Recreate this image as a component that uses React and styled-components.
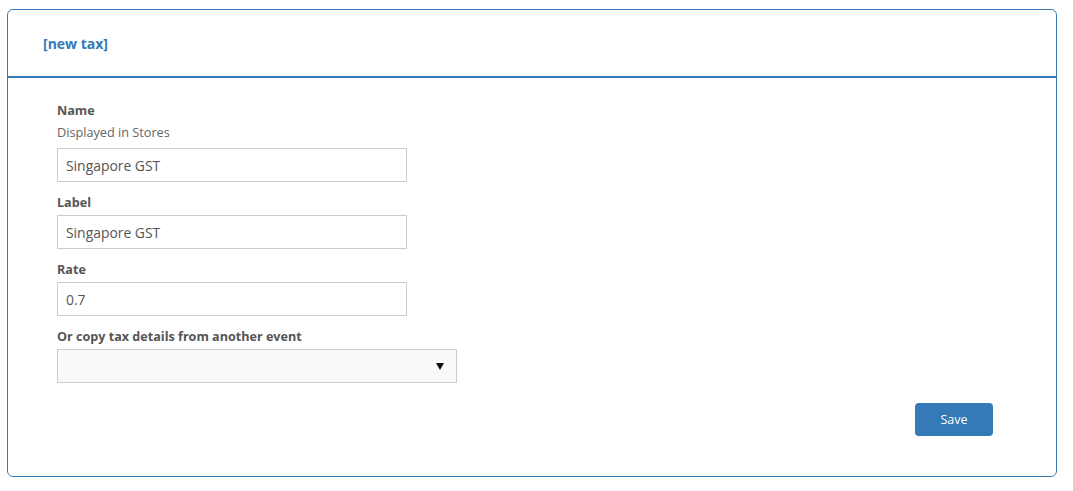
import React from "react";
import styled, { createGlobalStyle } from "styled-components";

const GlobalStyle = createGlobalStyle`
  body {
    margin: 0;
    background: #fff;
    font-family: "Open Sans", "Liberation Sans", sans-serif;
    color: #555;
  }
`;

const Page = styled.div`
  padding: 9px 16px 14px 7px;
`;

const Panel = styled.div`
  border: 1px solid #337ab7;
  border-radius: 6px;
`;

const Header = styled.div`
  height: 66px;
  display: flex;
  align-items: center;
  padding-left: 35px;
  border-bottom: 2px solid #337ab7;
`;

const Title = styled.h3`
  margin: 0;
  font-size: 14px;
  font-weight: 700;
  color: #337ab7;
`;

const Body = styled.div`
  padding: 24px 63px 40px 49px;
  display: flex;
  flex-direction: column;
`;

const Field = styled.div`
  display: flex;
  flex-direction: column;
  margin-bottom: 12px;
`;

const Label = styled.label`
  font-size: 12.6px;
  font-weight: 700;
  line-height: 18px;
  color: #555;
  margin-bottom: 3px;
`;

const Hint = styled.div`
  font-size: 12.7px;
  line-height: 18px;
  color: #666;
  margin-bottom: 7px;
`;

const Input = styled.input`
  box-sizing: border-box;
  width: 350px;
  height: 34px;
  border: 1px solid #ccc;
  padding: 0 8px;
  font-family: inherit;
  font-size: 13.9px;
  color: #555;
  outline: none;
`;

const SelectBox = styled.div`
  box-sizing: border-box;
  width: 400px;
  height: 34px;
  border: 1px solid #ccc;
  background: #f9f9f9;
  display: flex;
  align-items: center;
  justify-content: flex-end;
  padding-right: 12px;
`;

const Caret = styled.span`
  width: 0;
  height: 0;
  border-left: 4px solid transparent;
  border-right: 4px solid transparent;
  border-top: 7px solid #111;
`;

const Actions = styled.div`
  display: flex;
  justify-content: flex-end;
  margin-top: 8px;
`;

const Button = styled.button`
  width: 78px;
  height: 33px;
  border: none;
  border-radius: 4px;
  background: #337ab7;
  color: #fff;
  font-family: inherit;
  font-size: 12.5px;
`;

export default function App() {
  return (
    <Page>
      <GlobalStyle />
      <Panel>
        <Header>
          <Title>[new tax]</Title>
        </Header>
        <Body>
          <Field>
            <Label>Name</Label>
            <Hint>Displayed in Stores</Hint>
            <Input defaultValue="Singapore GST" />
          </Field>
          <Field>
            <Label>Label</Label>
            <Input defaultValue="Singapore GST" />
          </Field>
          <Field>
            <Label>Rate</Label>
            <Input defaultValue="0.7" />
          </Field>
          <Field>
            <Label>Or copy tax details from another event</Label>
            <SelectBox>
              <Caret />
            </SelectBox>
          </Field>
          <Actions>
            <Button>Save</Button>
          </Actions>
        </Body>
      </Panel>
    </Page>
  );
}
